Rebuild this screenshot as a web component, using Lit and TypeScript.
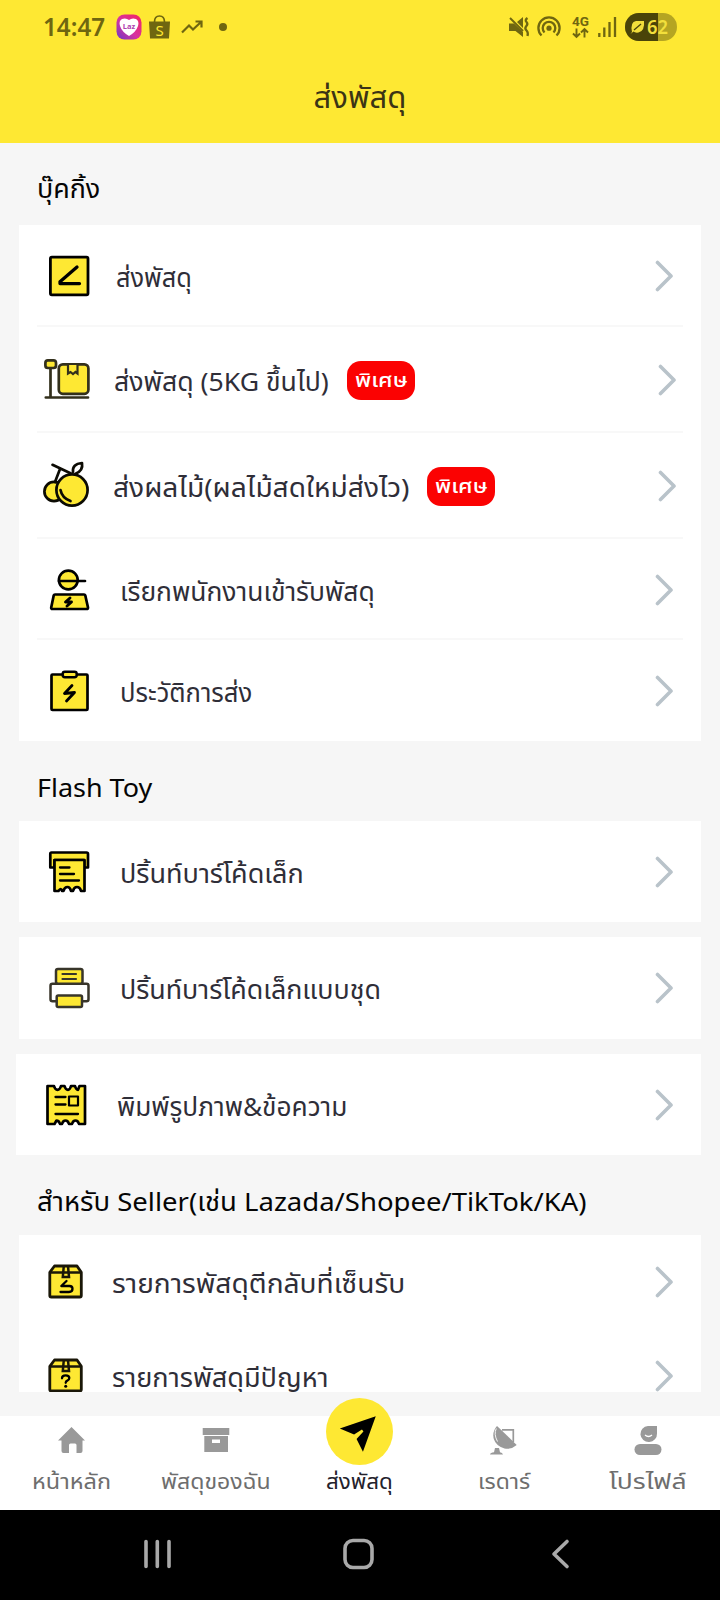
import { LitElement, html, css, svg, nothing } from "lit";
import { customElement, property } from "lit/decorators.js";
import { styleMap } from "lit/directives/style-map.js";

const Y = "#fee833";

/** Text label squeezed or stretched horizontally to a known width. */
@customElement("fit-text")
class FitText extends LitElement {
  static styles = css`
    :host { display: block; flex: none; white-space: nowrap; }
    .t { display: inline-block; transform-origin: 0 50%; white-space: pre; }
  `;
  @property({ type: Number }) w = 0;
  @property() text = "";
  render() {
    return html`<span class="t">${this.text}</span>`;
  }
  updated() {
    const t = this.renderRoot.querySelector(".t") as HTMLElement;
    this.style.width = `${this.w}px`;
    t.style.transform = `scaleX(${this.w / t.offsetWidth})`;
  }
}

const box = svg`
  <path d="M10.500 7H33L37.300 13.300V36.500Q37.300 38 35.800 38H7.300Q5.800 38 5.800 36.500V13.300Z" fill="${Y}" stroke="#1a1708" stroke-width="2.800" stroke-linejoin="round"/>
  <path d="M5.800 13.600H37.300M19.800 7L18.800 18H25L24 7" fill="none" stroke="#1a1708" stroke-width="2.500"/>`;

const icons: Record<string, unknown> = {
  send: svg`<rect x="6.400" y="4.200" width="37.600" height="37.600" rx="1.500" fill="${Y}" stroke="#000" stroke-width="2.800"/>
    <path d="M33 14L16 28.800V30.600H35.500" fill="none" stroke="#000" stroke-width="3.300" stroke-linecap="round" stroke-linejoin="round"/>`,
  scale: svg`<g stroke="#33301c" stroke-width="2.700" fill="${Y}" stroke-linecap="round">
    <path d="M6.500 11V40.500M1.800 40.500H44" fill="none"/>
    <rect x="1.400" y="3.400" width="10.600" height="7.600" rx="2.500"/>
    <rect x="14.800" y="7.400" width="29.600" height="29.400" rx="4"/>
    <path d="M24 8V16.500L26.500 15L29 17L31.500 15L33.500 16.500V8" stroke-width="2.200"/></g>`,
  fruit: svg`<g stroke="#0c0b04" stroke-width="2.700" fill="${Y}" stroke-linecap="round" stroke-linejoin="round">
    <circle cx="10" cy="28.500" r="9.600"/><circle cx="28" cy="27" r="15.600"/>
    <path d="M8.500 1.800L27 10.500M16 6L11 19" fill="none"/>
    <path d="M29 9Q28 1 38 0Q39.500 8 31 11" fill="#fff"/>
    <path d="M16.500 27Q18 35 26.500 38" fill="none"/></g>`,
  courier: svg`<g stroke="#000" stroke-width="2.700" fill="${Y}" stroke-linejoin="round" stroke-linecap="round">
    <circle cx="24.300" cy="13" r="9.400"/><path d="M15 14H41" fill="none"/>
    <path d="M11 27.500H40Q41 27.500 41.300 28.500L44 40.500Q44 42 42.500 42H8.500Q7 42 7.200 40.500L9.700 28.500Q10 27.500 11 27.500Z"/></g>
    <path d="M26 31L21.500 35H27.500L23 39" stroke="#000" stroke-width="2.900" stroke-linecap="round" stroke-linejoin="round" fill="none"/>`,
  history: svg`<rect x="7.500" y="6.500" width="36" height="35.500" rx="1" fill="${Y}" stroke="#000" stroke-width="2.700"/>
    <rect x="18.700" y="3.700" width="14" height="5.500" rx="2.200" fill="${Y}" stroke="#000" stroke-width="2.500"/>
    <path d="M28 17.500L20.500 25.500L30.500 24.500L22.500 33" stroke="#000" stroke-width="2.800" stroke-linecap="round" stroke-linejoin="round" fill="none"/>`,
  receipt: svg`<g stroke="#000" stroke-width="2.700" fill="${Y}" stroke-linejoin="round" stroke-linecap="round">
    <path d="M7.500 3.500H42.500Q44 3.500 44 5V18.500H40V11H10.500V18.500H6.300V5Q6.300 3.500 7.500 3.500Z"/>
    <path d="M10.500 11H40.500V42H37Q36 38 33 38Q30 38 29 42H27Q26 38 23.500 38Q20.500 38 19.500 42H18Q17 38 14.500 42H10.500Z"/>
    <path d="M16 18.500H25.500M16 25H30M16 31.500H35" fill="none" stroke-width="2.300"/></g>`,
  printer: svg`<g stroke="#38352a" stroke-width="2.500" fill="${Y}" stroke-linejoin="round" stroke-linecap="round">
    <rect x="6.500" y="18.700" width="38" height="17.500" rx="2" fill="#fff"/>
    <rect x="12" y="3.900" width="26.500" height="14.800" rx="2"/>
    <path d="M18.500 9H32M18.500 14H32" fill="none" stroke-width="2.200"/>
    <rect x="12.700" y="30.500" width="25.300" height="11.500" rx="1.500"/></g>`,
  ticket: svg`<g stroke="#000" stroke-width="2.700" fill="${Y}" stroke-linejoin="round" stroke-linecap="round">
    <path d="M7 4H13Q14 7.800 16.500 7.800Q19 7.800 20 4H23.500Q24.500 7.800 27 7.800Q29 7.800 30 4H34Q35 7.800 37 7.800L38.500 4H44V42H38Q37 38.500 34.500 38.500Q32 38.500 31 42H28Q27 38.500 24.500 38.500Q22 38.500 21 42H19Q18 38.500 15.500 38.500L13.500 42H6.500V4Z"/>
    <path d="M14.500 15H24.500M14.500 22.500H24.500M14.500 32H37" fill="none" stroke-width="2.300"/>
    <rect x="28" y="14.500" width="9" height="9" fill="none" stroke-width="2.200"/></g>`,
  back: svg`${box}<path d="M22.500 22L17.300 27H25.500Q28.500 27 28.500 29.800Q28.500 33 25 33H16.500" fill="none" stroke="#000" stroke-width="2.300" stroke-linecap="round" stroke-linejoin="round"/>`,
  problem: svg`${box}<path d="M18 25.300Q18 22.300 21.700 22.300Q25.300 22.300 25.300 25Q25.300 26.800 23.300 27.600Q21.700 28.300 21.700 29.800" fill="none" stroke="#000" stroke-width="2.300" stroke-linecap="round"/><circle cx="21.700" cy="33.300" r="1.500"/>`,
};

interface Item {
  icon: string; text: string; w: number; gap: number; h: number; badge?: boolean; end?: number;
}

@customElement("menu-card")
class MenuCard extends LitElement {
  static styles = css`
    :host { display: block; background: #fff; }
    .row { display: flex; align-items: center; box-sizing: border-box; margin: 0 18px; padding-left: 7px; color: #2f2e38; font-size: 26px; line-height: 36px; }
    .row.line:not(:last-of-type) { box-shadow: inset 0 -2px #f8f8f8; }
    .ic { width: 46px; height: 46px; flex: none; overflow: visible; }
    .lbl { position: relative; top: 1px; left: -1px; }
    .badge { margin-left: 17px; width: 68px; height: 39px; border-radius: 14px; background: #fb0202; color: #fff; display: flex; justify-content: center; align-items: center; font-size: 20px; font-weight: 500; }
    .chev { margin-left: auto; width: 19px; height: 34px; flex: none; }
  `;
  @property({ attribute: false }) items: Item[] = [];
  @property({ type: Boolean }) plain = false;
  render() {
    return this.items.map((i) => html`
      <div class="row ${this.plain ? "" : "line"}" style=${styleMap({ height: `${i.h}px`, paddingRight: `${i.end ?? 9}px` })}>
        <svg class="ic" viewBox="0 0 46 46">${icons[i.icon]}</svg>
        <fit-text class="lbl" .text=${i.text} .w=${i.w} style=${styleMap({ marginLeft: `${i.gap}px` })}></fit-text>
        ${i.badge ? html`<div class="badge"><fit-text .text=${"พิเศษ"} .w=${53}></fit-text></div>` : nothing}
        <svg class="chev" viewBox="0 0 19 34"><path d="M2.500 3.500L16 17L2.500 30.500" fill="none" stroke="#b9c3ca" stroke-width="3.600" stroke-linecap="round" stroke-linejoin="round"/></svg>
      </div>`);
  }
}

const booking: Item[] = [
  { icon: "send", text: "ส่งพัสดุ", w: 76, gap: 27, h: 102 },
  { icon: "scale", text: "ส่งพัสดุ (5KG ขึ้นไป)", w: 215, gap: 25, h: 106, badge: true, end: 6 },
  { icon: "fruit", text: "ส่งผลไม้(ผลไม้สดใหม่ส่งไว)", w: 296, gap: 24, h: 106, badge: true, end: 6 },
  { icon: "courier", text: "เรียกพนักงานเข้ารับพัสดุ", w: 255, gap: 31, h: 101 },
  { icon: "history", text: "ประวัติการส่ง", w: 132, gap: 31, h: 101 },
];
const seller: Item[] = [
  { icon: "back", text: "รายการพัสดุตีกลับที่เซ็นรับ", w: 293, gap: 23, h: 94 },
  { icon: "problem", text: "รายการพัสดุมีปัญหา", w: 217, gap: 23, h: 94 },
];

const nav = [
  { t: "หน้าหลัก", w: 79, i: svg`<path d="M13.500 1L27 14.500H24.500V25Q24.500 27 22.500 27H18.500V19Q18.500 17.500 17 17.500H12.500Q11 17.500 11 19V27H5.500Q3.500 27 3.500 25V14.500H0Z"/>` },
  { t: "พัสดุของฉัน", w: 110, i: svg`<path d="M.7 2H27.300V9H.7Z"/><path d="M2.300 10H26V26H2.300ZM10 13.500V17H18V13.500Z" fill-rule="evenodd"/>` },
  { t: "ส่งพัสดุ", w: 67, i: null },
  { t: "เรดาร์", w: 52, i: svg`<path d="M7 0Q14 6.500 26.700 19Q21 24 14.500 22.500Q6 20 3.800 13Q2 5.500 7 0Z"/><path d="M12 3.800H23.300V16" fill="none" stroke="#999" stroke-width="1.700"/><path d="M6.300 2.500Q3.500 8 7.500 15.500" stroke="#fff" stroke-width=".9" fill="none"/><path d="M5 22H9L10 26.300Q12.500 26.500 13 28.500H0Q.500 26.500 4 26.300Z"/>` },
  { t: "โปรไฟล์", w: 77, i: svg`<path d="M14 0H23V7.500A8.300 8 0 1 1 14 0Z"/><path d="M11 9Q14.500 12 18 9" fill="none" stroke="#fff" stroke-width="1.300"/><rect x=".5" y="18" width="27" height="11" rx="5.500"/>` },
];

@customElement("app-root")
class AppRoot extends LitElement {
  static styles = css`
    :host { display: flex; flex-direction: column; width: 720px; height: 1600px; overflow: hidden; background: #f6f6f6; font-family: "Noto Sans", "Noto Sans Thai", sans-serif; }
    .head { background: #fee833; height: 143px; flex: none; display: flex; flex-direction: column; color: #3b3415; }
    .status { height: 54px; padding: 0 43px; display: flex; align-items: center; color: #6f6610; }
    .time { font: 600 25px/30px "Noto Sans"; margin-top: -2px; }
    .s { flex: none; overflow: visible; }
    .laz { margin-left: 11px; } .bag { margin-left: 7px; } .trend { margin-left: 11px; } .dot { margin-left: 16px; }
    .mute { margin-left: auto; } .hot { margin-left: 8px; }
    .net { margin-left: 11px; } .sig { margin-left: 9px; } .bat { margin-left: 8px; }
    .title { height: 84px; display: flex; justify-content: center; align-items: center; font-size: 31px; line-height: 44px; }
    .body { height: 1249px; flex: none; overflow: hidden; display: flex; flex-direction: column; }
    .h { flex: none; padding-left: 37px; box-sizing: border-box; font-size: 26px; color: #050505; display: flex; align-items: center; }
    .h1 { height: 82px; padding-top: 11px; }
    .h2 { height: 80px; padding-top: 12px; }
    .h3 { height: 80px; padding-top: 15px; }
    menu-card { flex: none; margin: 0 19px; }
    .gap { margin-bottom: 15px; }
    .wide { margin-left: 16px; }
    .tabs { margin-top: 24px; height: 94px; flex: none; background: #fff; display: grid; grid-template-columns: repeat(5, 144px); }
    .tab { display: flex; flex-direction: column; align-items: center; color: #6e6e6e; font-size: 22px; line-height: 30px; padding-top: 10px; padding-right: 1px; }
    .tab svg { width: 28px; height: 29px; fill: #999; }
    .tab fit-text { margin-top: 10px; }
    .tab.on { color: #24222c; padding-top: 0; margin-top: -18px; }
    .tab.on svg { width: 67px; height: 67px; }
    .tab.on fit-text { margin-top: 0; }
    .sys { height: 90px; flex: none; background: #000; }
    .sys svg { display: block; }
  `;
  render() {
    const c = "#6f6610";
    return html`
      <div class="head">
        <div class="status">
          <fit-text class="time" .text=${"14:47"} .w=${62}></fit-text>
          <svg class="s laz" width="26" height="26" viewBox="0 0 26 26"><defs><linearGradient id="g" x1="1" y1="0" x2="0" y2="1"><stop offset="0" stop-color="#f4255f"/><stop offset=".55" stop-color="#d733a0"/><stop offset="1" stop-color="#6a39c8"/></linearGradient></defs>
            <rect x=".5" y=".5" width="25" height="25" rx="8" fill="url(#g)"/><path d="M13 6Q16 3.500 20 5Q23.500 7 22 12Q20 18 13 22Q6 18 4 12Q2.500 7 6 5Q10 3.500 13 6Z" fill="#fff"/>
            <text x="13" y="15" text-anchor="middle" font-size="7.500" font-weight="bold" fill="#b044b0">Laz</text></svg>
          <svg class="s bag" width="21" height="24" viewBox="0 0 21 24"><path d="M5.500 7Q5.500 1 10.500 1T15.500 7" fill="none" stroke="${c}" stroke-width="1.700"/><path d="M0 6.500H21L20 23.500H1Z" fill="${c}"/>
            <text x="10.500" y="20.500" text-anchor="middle" font-size="15" fill="${Y}">S</text></svg>
          <svg class="s trend" width="22" height="14" viewBox="0 0 22 14"><path d="M1 12.500L8 5.500L12 9.500L20 2M14.500 1.500H20.500V7.500" fill="none" stroke="${c}" stroke-width="2.200"/></svg>
          <svg class="s dot" width="8" height="8" viewBox="0 0 8 8"><circle cx="4" cy="4" r="4" fill="${c}"/></svg>
          <svg class="s mute" width="20" height="20" viewBox="0 0 20 20"><path d="M0 6.500H5L14 15V20L6.500 14H0ZM8 5L14 0V11Z" fill="${c}"/><path d="M1 1L14 14" stroke="${c}" stroke-width="2"/><path d="M18.500 1Q15.500 3 17.500 5T17 9.500Q15.500 11.500 17.500 13.500T18.500 19" fill="none" stroke="${c}" stroke-width="2.300"/></svg>
          <svg class="s hot" width="24" height="22" viewBox="0 0 24 22"><g fill="none" stroke="${c}" stroke-width="2.300"><path d="M4.500 19.500A10.600 10.600 0 1 1 19.500 19.500"/><path d="M7.500 16.500A6.300 6.300 0 1 1 16.500 16.500"/></g><circle cx="12" cy="12.200" r="2.600" fill="${c}"/></svg>
          <svg class="s net" width="17" height="22" viewBox="0 0 17 22"><text x="8.500" y="10" text-anchor="middle" font-size="12.500" font-weight="bold" font-family="Roboto" fill="${c}" textLength="17" lengthAdjust="spacingAndGlyphs">4G</text><path d="M4.500 12.500V20.500M1 17.500L4.500 21L8 17.500M12.500 21.500V13.500M9 16.500L12.500 13L16 16.500" fill="none" stroke="${c}" stroke-width="1.900"/></svg>
          <svg class="s sig" width="19" height="20" viewBox="0 0 19 20"><path d="M1.300 16V20M6.300 10.500V20M11.500 5V20M17 0V20" stroke="${c}" stroke-width="2.300"/></svg>
          <svg class="s bat" width="52" height="28" viewBox="0 0 52 28"><defs><clipPath id="c"><rect width="52" height="28" rx="14"/></clipPath></defs><g clip-path="url(#c)"><rect width="52" height="28" fill="#b5a522"/><rect width="33" height="28" fill="#4a4409"/></g>
            <path d="M7 19Q5 9 11 8H19Q20 18 13.500 19.500Q10 20 8.500 18.500L5.500 21Z" fill="#f2df3c"/><path d="M9 17L16 11" stroke="#4a4409" stroke-width="1.300"/>
            <text x="22" y="20.500" font-size="19" font-weight="600" fill="#f2df3c" textLength="21" lengthAdjust="spacingAndGlyphs">62</text></svg>
        </div>
        <div class="title"><fit-text .text=${"ส่งพัสดุ"} .w=${93}></fit-text></div>
      </div>
      <div class="body">
        <div class="h h1"><fit-text .text=${"บุ๊คกิ้ง"} .w=${63}></fit-text></div>
        <menu-card .items=${booking}></menu-card>
        <div class="h h2"><fit-text .text=${"Flash Toy"} .w=${115}></fit-text></div>
        <menu-card class="gap" .items=${[{ icon: "receipt", text: "ปริ้นท์บาร์โค้ดเล็ก", w: 184, gap: 31, h: 101 }]}></menu-card>
        <menu-card class="gap" .items=${[{ icon: "printer", text: "ปริ้นท์บาร์โค้ดเล็กแบบชุด", w: 261, gap: 31, h: 102 }]}></menu-card>
        <menu-card class="wide" .items=${[{ icon: "ticket", text: "พิมพ์รูปภาพ&ข้อความ", w: 230, gap: 31, h: 101 }]}></menu-card>
        <div class="h h3"><fit-text .text=${"สำหรับ Seller(เช่น Lazada/Shopee/TikTok/KA)"} .w=${550}></fit-text></div>
        <menu-card plain .items=${seller}></menu-card>
      </div>
      <div class="tabs">
        ${nav.map((n) => html`<div class="tab ${n.i ? "" : "on"}">
          ${n.i ? html`<svg viewBox="0 0 28 29">${n.i}</svg>`
            : html`<svg viewBox="0 0 68 68"><circle cx="34" cy="34" r="34" fill="${Y}"/><path d="M50.500 18.500L37.500 54.500L31 41.500L38 34L36.500 32L28.500 37L14 31Z" fill="#000"/></svg>`}
          <fit-text .text=${n.t} .w=${n.w}></fit-text></div>`)}
      </div>
      <div class="sys"><svg width="720" height="90" viewBox="0 0 720 90" fill="none" stroke="#a9a9a9" stroke-width="3.600" stroke-linecap="round" stroke-linejoin="round">
        <path d="M146 31.500V56.500M157.300 31.500V56.500M169 31.500V56.500"/><rect x="345" y="30.500" width="27" height="27" rx="8"/><path d="M567 31.500L554 44L567 56.500"/></svg></div>`;
  }
}
